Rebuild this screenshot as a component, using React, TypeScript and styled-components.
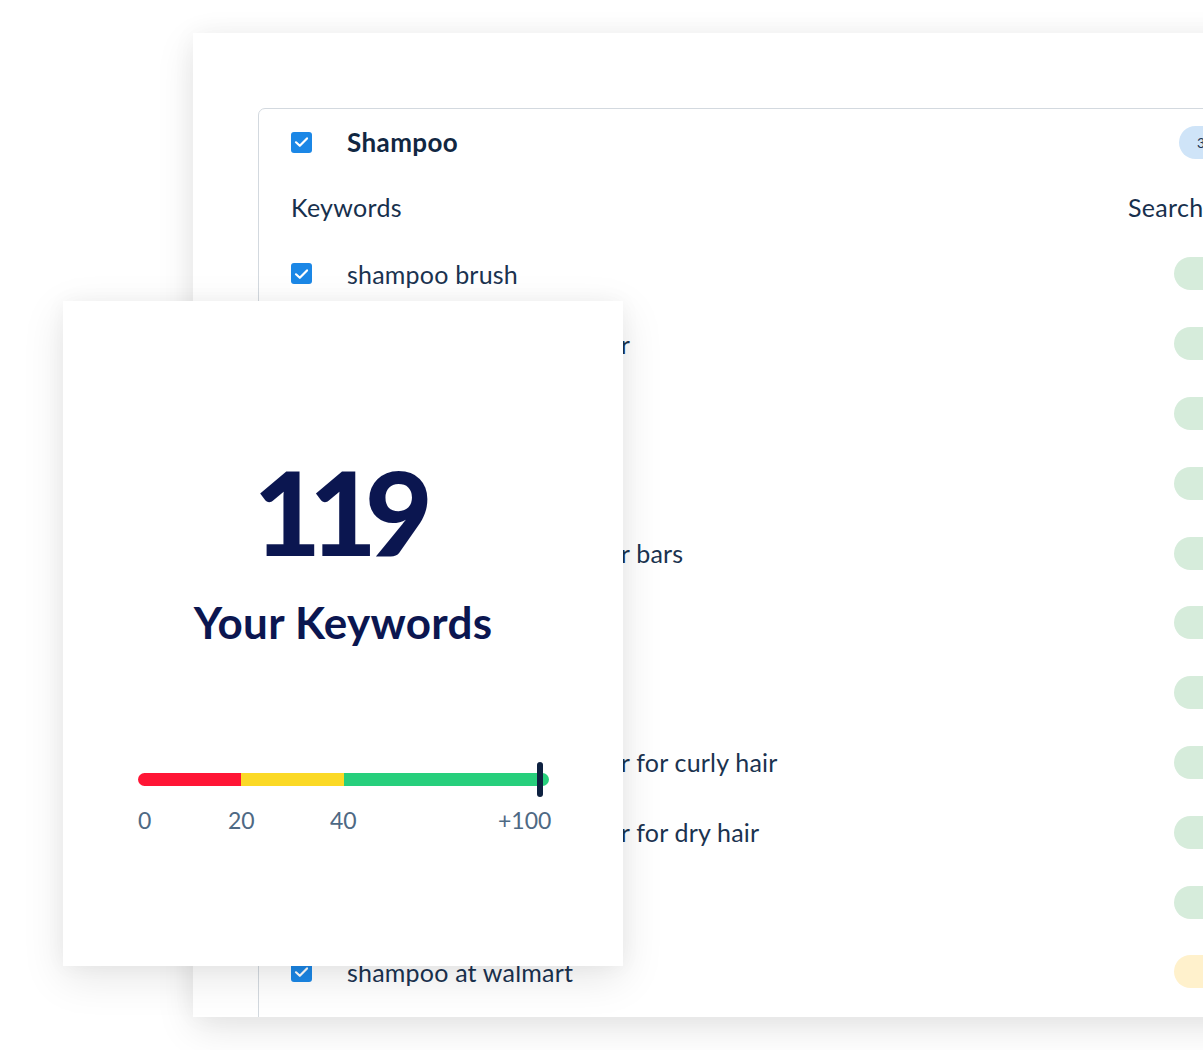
import React from "react";
import styled, { createGlobalStyle } from "styled-components";

const Global = createGlobalStyle`
  html, body { margin: 0; padding: 0; background: #ffffff; }
  body { font-family: Lato, "Open Sans", sans-serif; }
`;

const Page = styled.div`
  position: relative;
  width: 1203px;
  height: 1050px;
  overflow: hidden;
  background: #ffffff;
  padding: 33px 0 0 193px;
  box-sizing: border-box;
`;

const Panel = styled.div`
  width: 1100px;
  height: 984px;
  background: #ffffff;
  box-shadow: 0 12px 36px rgba(0, 0, 0, 0.1), 0 0 24px rgba(0, 0, 0, 0.04);
  padding: 75px 0 0 65px;
  box-sizing: border-box;
  overflow: hidden;
`;

const Group = styled.div`
  width: 1000px;
  border: 1.5px solid #d3d9df;
  border-radius: 7px;
  padding: 0 0 60px 32px;
  box-sizing: border-box;
  color: #17304d;
`;

const TitleRow = styled.div`
  display: grid;
  grid-template-columns: 56px 1fr 78px;
  align-items: center;
  height: 66px;
`;

const HeadRow = styled.div`
  display: grid;
  grid-template-columns: 1fr 129px;
  align-items: center;
  height: 64px;
  font-size: 25px;
  letter-spacing: 0.3px;
  white-space: nowrap;
`;

const Row = styled.div`
  display: grid;
  grid-template-columns: 56px 1fr 83px;
  align-items: center;
  height: 69.8px;
`;

const Check = styled.span`
  width: 21px;
  height: 21px;
  border-radius: 3px;
  background: #1b87e6;
  display: flex;
  align-items: center;
  justify-content: center;
`;

const Title = styled.span`
  font-size: 26px;
  font-weight: 700;
  color: #112742;
  letter-spacing: 0.4px;
`;

const Keyword = styled.span`
  font-size: 25px;
  color: #1b3350;
  letter-spacing: 0.2px;
  white-space: nowrap;
`;

const Pill = styled.span<{ $bg: string }>`
  display: flex;
  align-items: center;
  height: 33px;
  border-radius: 17px 0 0 17px;
  background: ${(p) => p.$bg};
  padding-left: 18px;
  font-size: 14px;
  color: #1c3350;
`;

const Card = styled.div`
  position: absolute;
  left: 63px;
  top: 301px;
  width: 560px;
  height: 665px;
  background: #ffffff;
  box-shadow: 0 12px 40px rgba(0, 0, 0, 0.1), 0 0 20px rgba(0, 0, 0, 0.04);
  display: flex;
  flex-direction: column;
  align-items: center;
  box-sizing: border-box;
  padding-top: 152px;
`;

const BigNumber = styled.div`
  font-size: 117px;
  font-weight: 900;
  line-height: 1;
  color: #0b1650;
  letter-spacing: -12px;
  margin-left: -12px;
`;

const CardLabel = styled.div`
  margin-top: 26px;
  font-size: 44px;
  font-weight: 700;
  color: #0b1650;
  letter-spacing: 0.3px;
`;

const Gauge = styled.div`
  margin-top: 125px;
  width: 411px;
  margin-left: 1px;
  position: relative;
`;

const Track = styled.div`
  display: flex;
  height: 13px;
  border-radius: 7px;
  overflow: hidden;
`;

const Seg = styled.div<{ $c: string; $w: number }>`
  width: ${(p) => p.$w}px;
  background: ${(p) => p.$c};
`;

const Marker = styled.div`
  position: absolute;
  left: 399px;
  top: -11px;
  width: 6px;
  height: 35px;
  border-radius: 3px;
  background: #0e2140;
`;

const Ticks = styled.div`
  position: relative;
  height: 30px;
  margin-top: 20px;
  font-size: 23px;
  color: #4e6984;
`;

const Tick = styled.span<{ $x: number }>`
  position: absolute;
  left: ${(p) => p.$x}px;
  top: 0;
`;

const CheckMark = () => (
  <svg width="15" height="12" viewBox="0 0 15 12">
    <path d="M2 6.3 L5.8 9.8 L13 2.4" fill="none" stroke="#fff" strokeWidth="2.2" strokeLinecap="round" strokeLinejoin="round" />
  </svg>
);

const keywords: { text: string; bg: string }[] = [
  { text: "shampoo brush", bg: "#d6ecdb" },
  { text: "shampoo and conditioner", bg: "#d6ecdb" },
  { text: "shampoo for men", bg: "#d6ecdb" },
  { text: "shampoo for women", bg: "#d6ecdb" },
  { text: "shampoo and conditioner bars", bg: "#d6ecdb" },
  { text: "shampoo for hair loss", bg: "#d6ecdb" },
  { text: "shampoo for kids", bg: "#d6ecdb" },
  { text: "shampoo and conditioner for curly hair", bg: "#d6ecdb" },
  { text: "shampoo and conditioner for dry hair", bg: "#d6ecdb" },
  { text: "shampoo for oily hair", bg: "#d6ecdb" },
  { text: "shampoo at walmart", bg: "#fff1cc" },
];

export default function App() {
  return (
    <>
      <Global />
      <Page>
        <Panel>
          <Group>
            <TitleRow>
              <Check>
                <CheckMark />
              </Check>
              <Title>Shampoo</Title>
              <Pill $bg="#cfe4f8">3</Pill>
            </TitleRow>
            <HeadRow>
              <span>Keywords</span>
              <span>Search volume</span>
            </HeadRow>
            {keywords.map((k) => (
              <Row key={k.text}>
                <Check>
                  <CheckMark />
                </Check>
                <Keyword>{k.text}</Keyword>
                <Pill $bg={k.bg} />
              </Row>
            ))}
          </Group>
        </Panel>
        <Card>
          <BigNumber>119</BigNumber>
          <CardLabel>Your Keywords</CardLabel>
          <Gauge>
            <Track>
              <Seg $c="#ff1535" $w={103} />
              <Seg $c="#fbd926" $w={103} />
              <Seg $c="#27cf7c" $w={205} />
            </Track>
            <Marker />
            <Ticks>
              <Tick $x={0}>0</Tick>
              <Tick $x={90}>20</Tick>
              <Tick $x={192}>40</Tick>
              <Tick $x={360}>+100</Tick>
            </Ticks>
          </Gauge>
        </Card>
      </Page>
    </>
  );
}
